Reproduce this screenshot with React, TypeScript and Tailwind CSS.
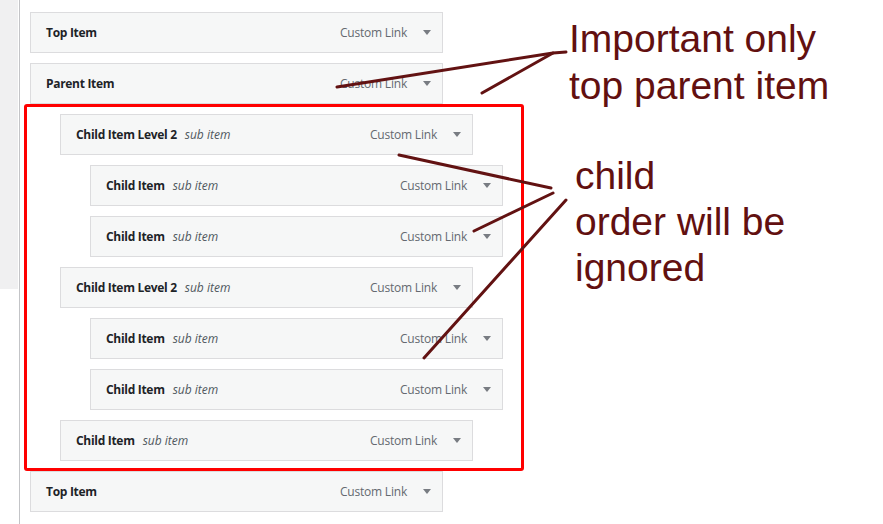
import React from 'react'

type MenuItem = {
  title: string
  sub?: boolean
  depth: number
}

const items: MenuItem[] = [
  { title: 'Top Item', depth: 0 },
  { title: 'Parent Item', depth: 0 },
  { title: 'Child Item Level 2', sub: true, depth: 1 },
  { title: 'Child Item', sub: true, depth: 2 },
  { title: 'Child Item', sub: true, depth: 2 },
  { title: 'Child Item Level 2', sub: true, depth: 1 },
  { title: 'Child Item', sub: true, depth: 2 },
  { title: 'Child Item', sub: true, depth: 2 },
  { title: 'Child Item', sub: true, depth: 1 },
  { title: 'Top Item', depth: 0 },
]

const indent = ['ml-0', 'ml-[30px]', 'ml-[60px]']

function MenuRow({ item }: { item: MenuItem }) {
  return (
    <div
      className={`flex h-[41px] w-[413px] shrink-0 items-center border border-[#dcdcde] bg-[#f6f7f7] pl-[15px] pr-[11px] text-[12px] ${indent[item.depth]}`}
    >
      <span className="font-bold tracking-[-0.3px] text-[#1d2327]">{item.title}</span>
      {item.sub && <span className="ml-[8px] italic text-[#50575e]">sub item</span>}
      <span className="ml-auto tracking-[-0.2px] text-[#646970]">Custom Link</span>
      <span className="ml-[16px] h-0 w-0 border-x-[4px] border-t-[5px] border-x-transparent border-t-[#787c82]" />
    </div>
  )
}

export default function App() {
  return (
    <div className="relative flex h-[524px] w-[883px] overflow-hidden bg-white font-['Open_Sans',sans-serif]">
      <div className="h-[289px] w-[18px] shrink-0 bg-[#f0f0f1]" />
      <div className="ml-[1px] flex flex-1 flex-col gap-[10px] border-l border-[#c3c4c7] pl-[10px] pt-[12px]">
        {items.map((item, i) => (
          <MenuRow key={i} item={item} />
        ))}
      </div>

      {/* annotation: red frame round the children */}
      <div className="absolute left-[24px] top-[104px] h-[367px] w-[500px] rounded-[3px] border-[3px] border-[#ff0000]" />

      {/* annotation lines */}
      <svg className="absolute left-0 top-0" width="883" height="524" viewBox="0 0 883 524" fill="none">
        <g stroke="#621212" strokeWidth="3" strokeLinecap="round" strokeLinejoin="round">
          <polyline points="337,87 553,53 566,52" />
          <line x1="482" y1="93" x2="553" y2="53" />
          <line x1="399" y1="155" x2="551" y2="188" />
          <line x1="474" y1="231" x2="553" y2="193" />
          <line x1="424" y1="358" x2="566" y2="200" />
        </g>
      </svg>

      <div className="absolute left-[569px] top-[15px] font-['Liberation_Sans',Arial,sans-serif] text-[39px] leading-[47px] text-[#621010]">
        <div>Important only</div>
        <div>top parent item</div>
      </div>
      <div className="absolute left-[575px] top-[153px] font-['Liberation_Sans',Arial,sans-serif] text-[39px] leading-[46px] text-[#621010]">
        <div>child</div>
        <div>order will be</div>
        <div>ignored</div>
      </div>
    </div>
  )
}
